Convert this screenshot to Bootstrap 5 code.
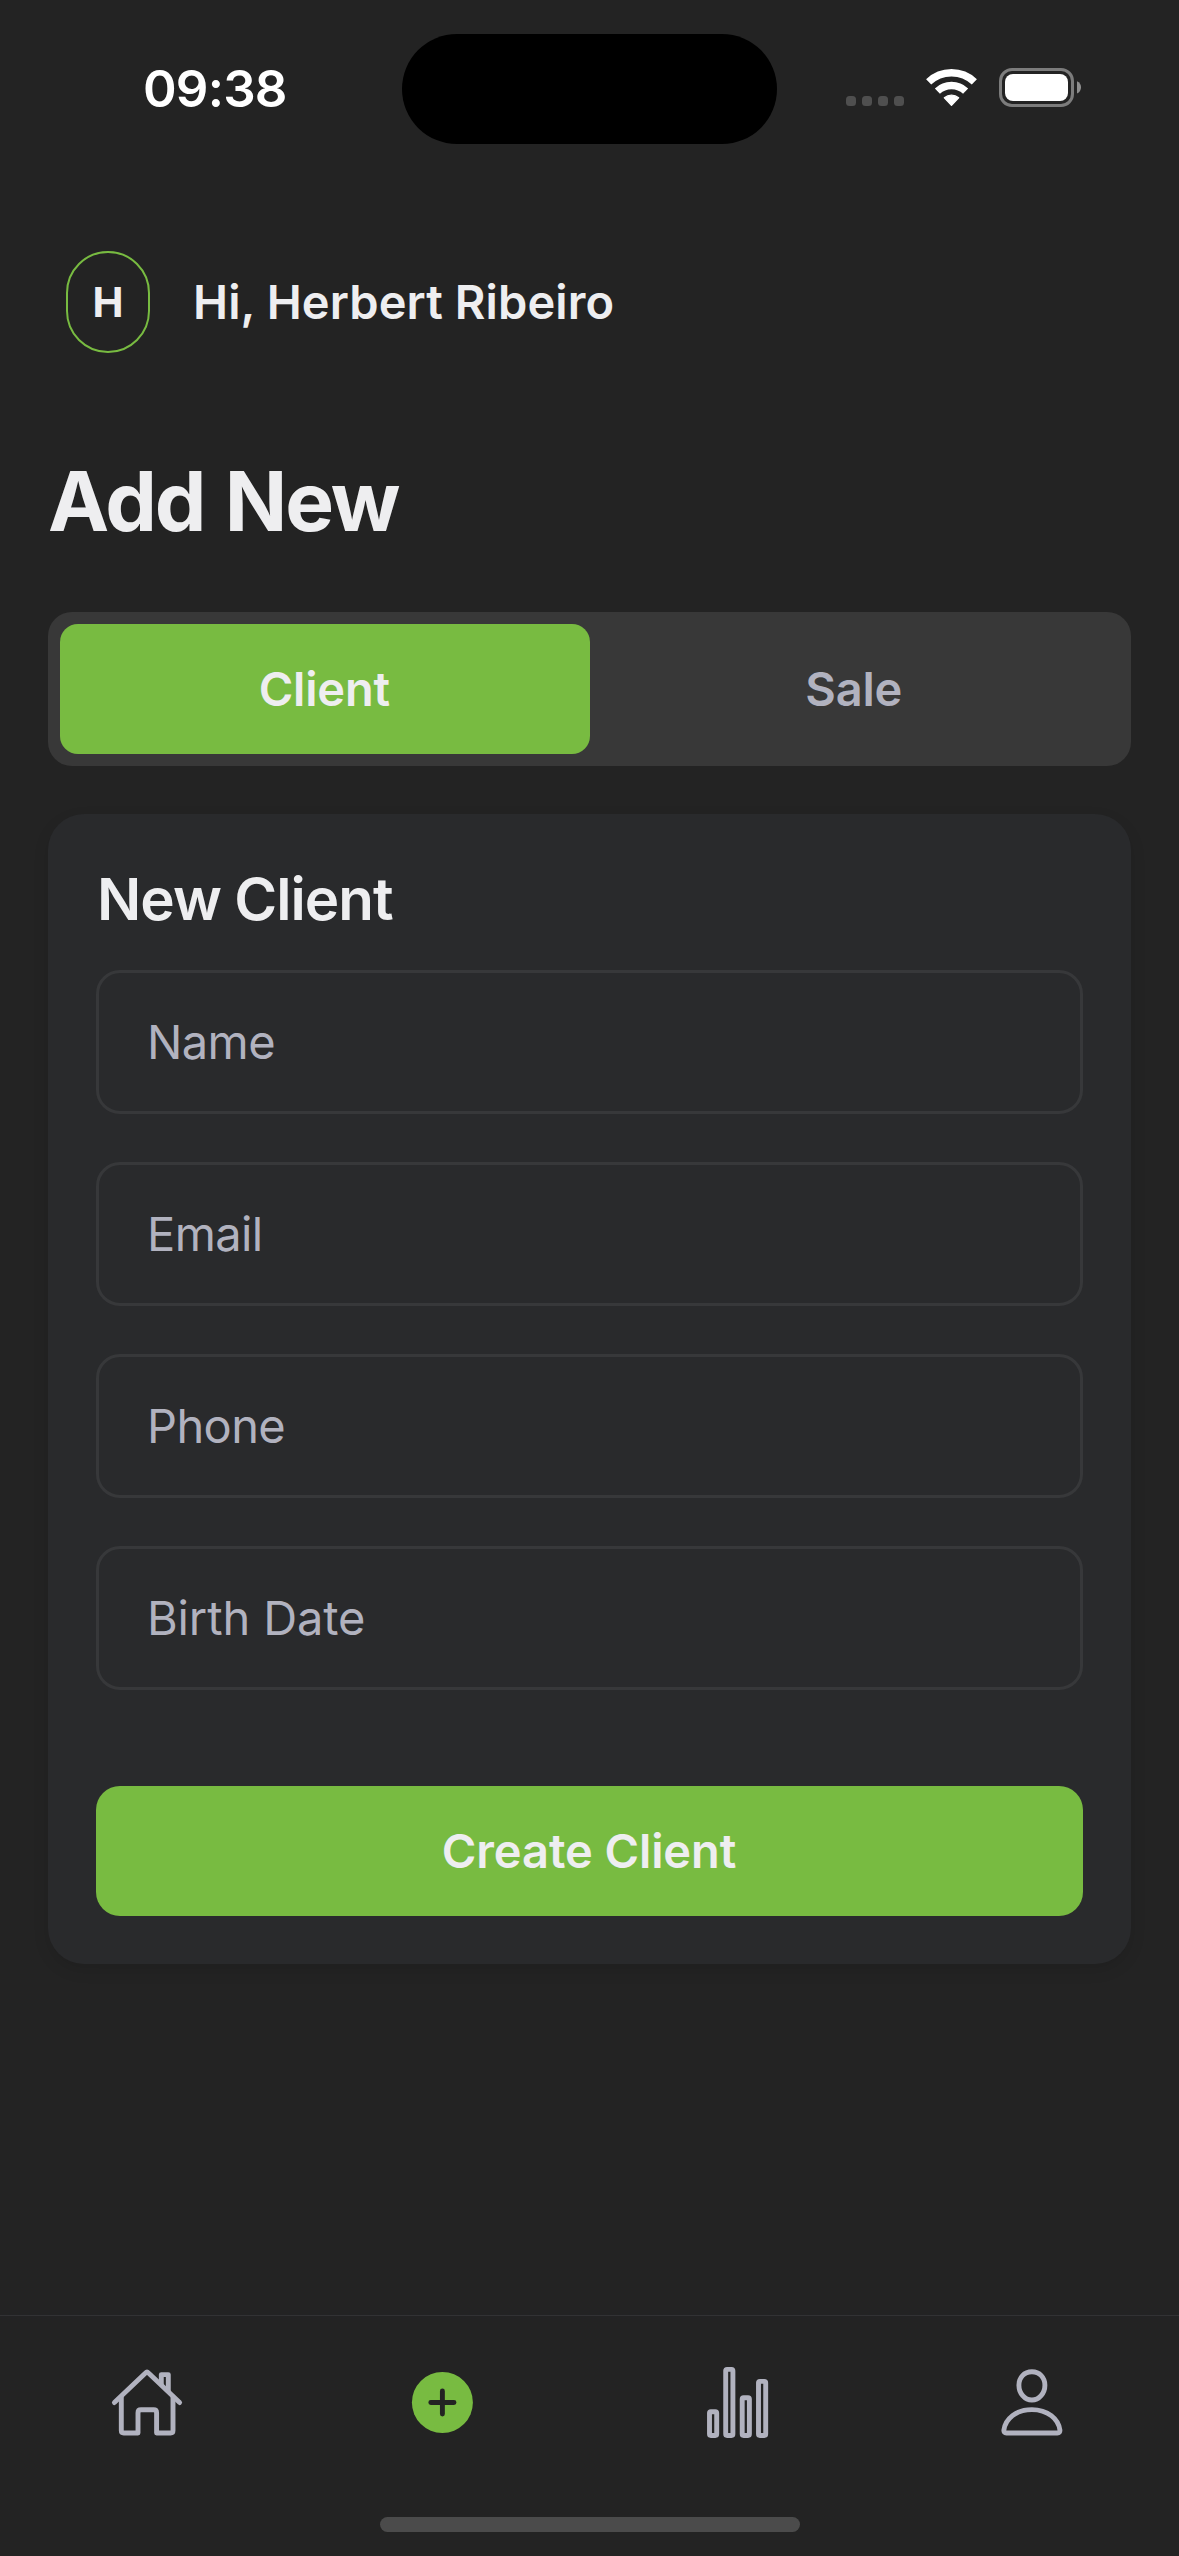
<!DOCTYPE html>
<html lang="en">
<head>
<meta charset="utf-8">
<meta name="viewport" content="width=device-width, initial-scale=1">
<title>Add New</title>
<link href="https://cdn.jsdelivr.net/npm/bootstrap@5.3.0/dist/css/bootstrap.min.css" rel="stylesheet">
<style>
  :root { --bg:#232323; --green:#78bb41; --ink:#eeeef0; --muted:#b1b2bf; --surface:#292a2c; --track:#383838; }
  body { background:var(--bg); color:var(--ink); font-family:Inter,"Liberation Sans",sans-serif; overflow:hidden; }
  svg { display:block; flex:none; }

  .status-bar { height:177px; }
  .status-side { width:402px; padding-bottom:2px; }
  .status-left { padding-left:143px; padding-bottom:0; font-size:51px; font-weight:600; letter-spacing:-.8px; line-height:1; color:#fff; }
  .status-right { padding-left:69px; gap:22px; }
  .island { width:375px; height:110px; background:#000; border-radius:55px; }

  .greeting { padding:74px 66px 0; gap:43px; }
  .avatar { width:84px; height:102px; border:2px solid var(--green); border-radius:42px; font-size:41.5px; font-weight:700; }
  .hello { font-size:47px; font-weight:600; line-height:60px; letter-spacing:.11px; }

  .content { padding:98px 48px 0; }
  .page-title { font-size:82px; font-weight:700; line-height:101px; letter-spacing:-2.2px; word-spacing:3.5px; margin-bottom:60px; }

  .segment { background:var(--track); border-radius:24px; padding:12px; margin-bottom:48px; }
  .segment .btn { height:130px; border:0; border-radius:18px; font-size:47px; font-weight:600; letter-spacing:-.2px; color:var(--muted); padding:0 1px 0 0; }
  .segment .btn.active { background:var(--green); color:var(--ink); }

  .form-card { background:var(--surface); border:0; border-radius:36px; padding:48px; color:var(--ink); box-shadow:0 6px 16px rgba(0,0,0,.1); }
  .form-title { font-size:58.3px; font-weight:600; line-height:74px; letter-spacing:-.96px; word-spacing:-.5px; padding-left:1px; margin-bottom:34px; }
  .fields { gap:48px; margin-bottom:96px; }
  .fields .form-control { height:144px; background:transparent; border:3px solid #37383a; border-radius:24px; padding:0 48px 2px; font-size:47px; letter-spacing:-.6px; color:var(--ink); }
  .fields .form-control.date-field { letter-spacing:-.13px; }
  .fields .form-control::placeholder { color:var(--muted); opacity:1; }
  .btn-create { height:130px; border:0; border-radius:24px; background:var(--green); color:var(--ink); font-size:47px; font-weight:600; letter-spacing:-.09px; padding:0 1px 0 0; }

  .tab-bar { height:241px; border-top:1px solid #323234; padding-top:38px; }
  .tab-bar svg { fill:none; stroke:var(--muted); stroke-width:4.9; stroke-linecap:round; stroke-linejoin:round; }
  .home-indicator { width:420px; height:15px; border-radius:8px; background:#4b4b4b; margin-bottom:24px; }
</style>
</head>
<body>
<div class="vh-100 d-flex flex-column">

  <header>
    <div class="status-bar d-flex align-items-center">
      <div class="status-side status-left">09:38</div>
      <div class="island"></div>
      <div class="status-side status-right d-flex align-items-center">
        <svg width="58" height="37" fill="#4f4f4f" aria-hidden="true">
          <rect x="0" y="27" width="10" height="10" rx="3.5"/><rect x="16" y="27" width="10" height="10" rx="3.5"/>
          <rect x="32" y="27" width="10" height="10" rx="3.5"/><rect x="48" y="27" width="10" height="10" rx="3.5"/>
        </svg>
        <svg width="51" height="38" fill="none" stroke="#fff" stroke-width="7.4" aria-hidden="true">
          <path d="M2.65 12.9A33.2 33.2 0 0 1 48.35 12.9M11.4 22.1A20.5 20.5 0 0 1 39.6 22.1"/>
          <path d="M25.5 36.2L18.4 28.8A10.8 10.8 0 0 1 32.6 28.8Z" fill="#fff" stroke-width="1.4" stroke-linejoin="round"/>
        </svg>
        <svg width="82" height="39" aria-hidden="true">
          <rect x="1.5" y="1.5" width="72" height="36" rx="11.5" fill="none" stroke="#7c7c7c" stroke-width="3"/>
          <rect x="6" y="6" width="63" height="27" rx="8" fill="#fff"/>
          <path d="M78 13.2Q82 15 82 19.3T78 25.6Z" fill="#8e8e8e"/>
        </svg>
      </div>
    </div>
    <div class="greeting d-flex align-items-center">
      <div class="avatar d-flex align-items-center justify-content-center">H</div>
      <div class="hello">Hi, Herbert Ribeiro</div>
    </div>
  </header>

  <main class="content">
    <h1 class="page-title mt-0">Add New</h1>
    <div class="segment d-flex">
      <button type="button" class="btn active flex-fill w-50">Client</button>
      <button type="button" class="btn flex-fill w-50">Sale</button>
    </div>
    <form class="card form-card">
      <h2 class="form-title mt-0">New Client</h2>
      <div class="fields d-flex flex-column">
        <input class="form-control" type="text" placeholder="Name">
        <input class="form-control" type="text" placeholder="Email">
        <input class="form-control" type="text" placeholder="Phone">
        <input class="form-control date-field" type="text" placeholder="Birth Date">
      </div>
      <button type="button" class="btn btn-create w-100">Create Client</button>
    </form>
  </main>

  <nav class="tab-bar mt-auto d-flex flex-column justify-content-between align-items-center">
    <div class="row g-0 w-100">
      <a class="col-3 d-flex justify-content-center" aria-label="Home">
        <svg width="96" height="96">
          <path d="M15.4 48.6L46.5 18.9Q48 17.4 49.5 18.9L80.6 48.6"/>
          <path d="M22.3 43V76.6Q22.3 79 24.7 79H39V58.7Q39 55.7 42 55.7H54.6Q57.6 55.7 57.6 58.7V79H71.6Q74 79 74 76.6V43"/>
          <path d="M62.3 30V20.6H69.3V37"/>
        </svg>
      </a>
      <a class="col-3 d-flex justify-content-center" aria-label="Add">
        <svg width="96" height="96">
          <circle cx="48.4" cy="48.5" r="30.5" fill="#78bb41" stroke="none"/>
          <path d="M36.8 48.5H60M48.4 36.9V60.1" stroke="#232323"/>
        </svg>
      </a>
      <a class="col-3 d-flex justify-content-center" aria-label="Statistics">
        <svg width="96" height="96">
          <rect x="20.5" y="57.7" width="7.2" height="23.8" rx="1.4"/>
          <rect x="36.7" y="15.4" width="7.2" height="66.1" rx="1.4"/>
          <rect x="53.2" y="43.7" width="7.2" height="37.8" rx="1.4"/>
          <rect x="69.5" y="27.4" width="7.2" height="54.1" rx="1.4"/>
        </svg>
      </a>
      <a class="col-3 d-flex justify-content-center" aria-label="Profile">
        <svg width="96" height="96">
          <path d="M47.9 17.8C40.2 17.8 34.9 23.4 34.9 31.2C34.9 39.2 40.7 46 47.9 46S60.9 39.2 60.9 31.2C60.9 23.4 55.6 17.8 47.9 17.8Z"/>
          <path d="M47.9 55.6C32 55.6 21.4 65 19.9 76Q19.6 79 22.4 79H73.4Q76.2 79 75.9 76C74.4 65 63.8 55.6 47.9 55.6Z"/>
        </svg>
      </a>
    </div>
    <div class="home-indicator"></div>
  </nav>
</div>
<script src="https://cdn.jsdelivr.net/npm/bootstrap@5.3.0/dist/js/bootstrap.bundle.min.js"></script>
</body>
</html>
